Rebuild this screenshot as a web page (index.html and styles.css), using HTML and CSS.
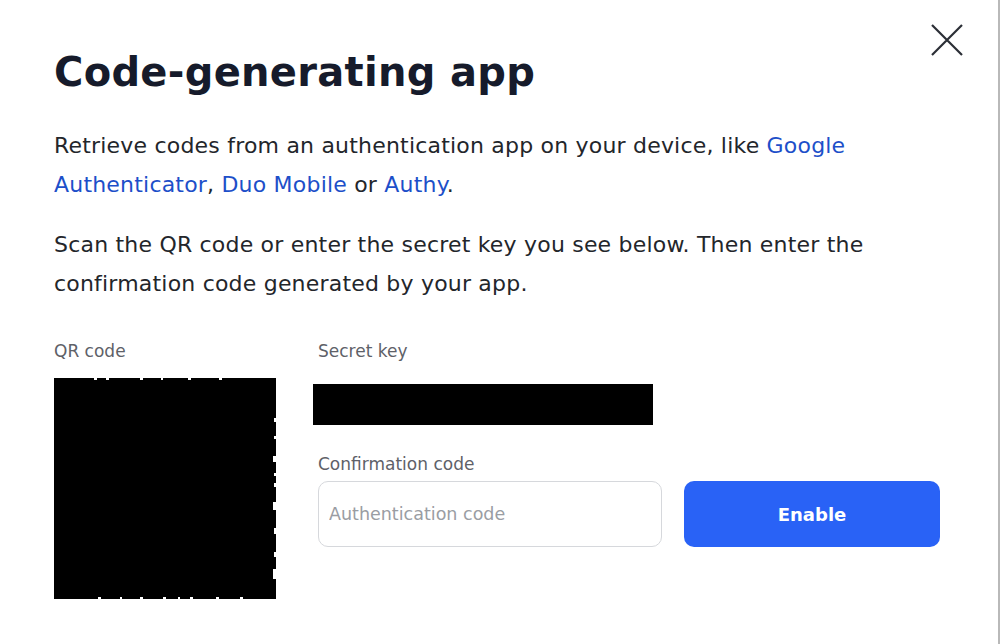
FILE: index.html
```html
<!DOCTYPE html>
<html>
<head>
  <meta charset="UTF-8">
  <title>Code-generating app</title>
  <link rel="stylesheet" href="styles.css">
</head>
<body>
  <div class="modal">
    <button class="close" aria-label="Close">
      <svg width="34" height="34" viewBox="0 0 34 34"><path d="M2 2 L32 32 M32 2 L2 32" stroke="#2b2f36" stroke-width="2.2" fill="none"/></svg>
    </button>
    <h1>Code-generating app</h1>
    <p>Retrieve codes from an authentication app on your device, like <a href="#">Google Authenticator</a>, <a href="#">Duo Mobile</a> or <a href="#">Authy</a>.</p>
    <p>Scan the QR code or enter the secret key you see below. Then enter the confirmation code generated by your app.</p>
    <div class="setup">
      <div class="qr-col">
        <label class="field-label">QR code</label>
        <svg class="qr" width="222" height="221" viewBox="0 0 222 221">
          <rect width="222" height="221" fill="#000"/>
          <g fill="#fff">
            <rect x="40" y="0" width="3" height="2"/>
            <rect x="52" y="0" width="3" height="2"/>
            <rect x="86" y="0" width="3" height="2"/>
            <rect x="107" y="0" width="2" height="2"/>
            <rect x="134" y="0" width="3" height="2"/>
            <rect x="165" y="0" width="3" height="2"/>
            <rect x="220" y="40" width="2" height="4"/>
            <rect x="220" y="58" width="2" height="3"/>
            <rect x="219" y="78" width="3" height="6"/>
            <rect x="220" y="95" width="2" height="3"/>
            <rect x="220" y="105" width="2" height="4"/>
            <rect x="219" y="124" width="3" height="8"/>
            <rect x="220" y="150" width="2" height="6"/>
            <rect x="220" y="174" width="2" height="5"/>
            <rect x="219" y="191" width="3" height="10"/>
            <rect x="44" y="219" width="3" height="2"/>
            <rect x="66" y="219" width="2" height="2"/>
            <rect x="86" y="219" width="3" height="2"/>
            <rect x="109" y="219" width="3" height="2"/>
            <rect x="124" y="219" width="2" height="2"/>
            <rect x="136" y="219" width="3" height="2"/>
            <rect x="162" y="219" width="3" height="2"/>
            <rect x="186" y="219" width="3" height="2"/>
          </g>
        </svg>
      </div>
      <div class="key-col">
        <label class="field-label">Secret key</label>
        <div class="secret"></div>
        <label class="field-label confirm-label">Confirmation code</label>
        <div class="confirm-row">
          <input type="text" placeholder="Authentication code">
          <button class="enable">Enable</button>
        </div>
      </div>
    </div>
  </div>
</body>
</html>
```

FILE: styles.css
```css
body {
  margin: 0;
  background: #fff;
  font-family: 'DejaVu Sans', 'Noto Sans', sans-serif;
  color: #1f2329;
  width: 1000px;
  height: 644px;
  box-sizing: border-box;
  border-right: 2px solid #b9b9b9;
  overflow: hidden;
}

.modal {
  position: relative;
  padding: 46px 0 0 54px;
}

.close {
  position: absolute;
  top: 23px;
  right: 34px;
  background: none;
  border: none;
  padding: 0;
  cursor: pointer;
}

h1 {
  margin: 0 0 28px;
  font-size: 40px;
  line-height: 52px;
  font-weight: 700;
  letter-spacing: 0.3px;
  color: #161b2b;
}

p {
  margin: 0 0 21px;
  width: 880px;
  font-size: 22px;
  line-height: 39px;
  letter-spacing: 0.2px;
  color: #23262b;
}

a {
  color: #1d4fc9;
  text-decoration: none;
}

.setup {
  display: flex;
  margin-top: 38px;
}

.field-label {
  display: block;
  font-size: 17px;
  color: #5e6168;
  line-height: 20px;
}

.qr-col {
  width: 259px;
}

.qr {
  display: block;
  margin-top: 17px;
}

.key-col {
  padding-left: 5px;
}

.secret {
  margin: 23px 0 0 -5px;
  width: 340px;
  height: 41px;
  background: #000;
}

.confirm-label {
  margin-top: 29px;
}

.confirm-row {
  display: flex;
  gap: 22px;
  margin-top: 7px;
}

input {
  width: 344px;
  height: 66px;
  box-sizing: border-box;
  border: 1px solid #d6d8dc;
  border-radius: 10px;
  padding: 0 10px;
  font-family: inherit;
  font-size: 17.5px;
  color: #23262b;
}

input::placeholder {
  color: #9a9da3;
}

.enable {
  width: 256px;
  height: 66px;
  border: none;
  border-radius: 10px;
  background: #2962f6;
  color: #fff;
  font-family: inherit;
  font-size: 18px;
  font-weight: 700;
  cursor: pointer;
}
```
